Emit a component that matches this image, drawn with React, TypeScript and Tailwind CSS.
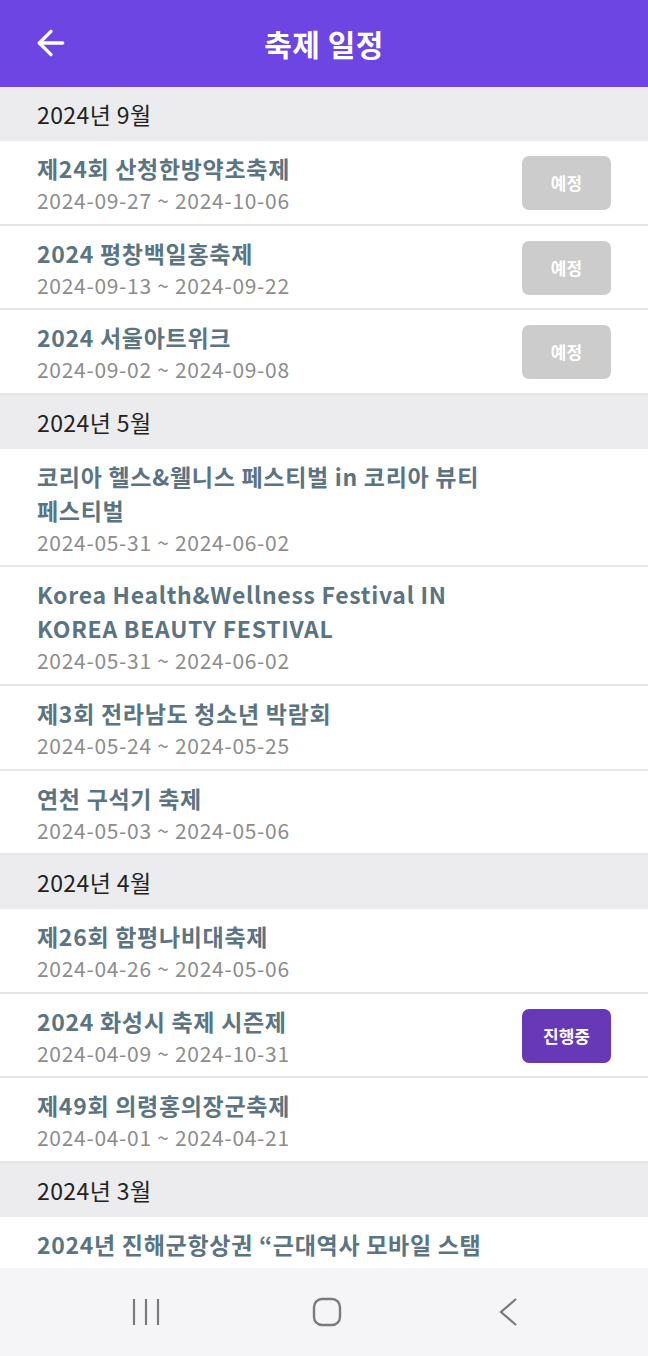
import { ArrowLeft } from "lucide-react";

type Festival = {
  title: string;
  period: string;
  status?: "upcoming" | "ongoing";
};

type MonthGroup = {
  label: string;
  items: Festival[];
};

const GROUPS: MonthGroup[] = [
  {
    label: "2024년 9월",
    items: [
      { title: "제24회 산청한방약초축제", period: "2024-09-27 ~ 2024-10-06", status: "upcoming" },
      { title: "2024 평창백일홍축제", period: "2024-09-13 ~ 2024-09-22", status: "upcoming" },
      { title: "2024 서울아트위크", period: "2024-09-02 ~ 2024-09-08", status: "upcoming" },
    ],
  },
  {
    label: "2024년 5월",
    items: [
      { title: "코리아 헬스&웰니스 페스티벌 in 코리아 뷰티 페스티벌", period: "2024-05-31 ~ 2024-06-02" },
      { title: "Korea Health&Wellness Festival IN KOREA BEAUTY FESTIVAL", period: "2024-05-31 ~ 2024-06-02" },
      { title: "제3회 전라남도 청소년 박람회", period: "2024-05-24 ~ 2024-05-25" },
      { title: "연천 구석기 축제", period: "2024-05-03 ~ 2024-05-06" },
    ],
  },
  {
    label: "2024년 4월",
    items: [
      { title: "제26회 함평나비대축제", period: "2024-04-26 ~ 2024-05-06" },
      { title: "2024 화성시 축제 시즌제", period: "2024-04-09 ~ 2024-10-31", status: "ongoing" },
      { title: "제49회 의령홍의장군축제", period: "2024-04-01 ~ 2024-04-21" },
    ],
  },
  {
    label: "2024년 3월",
    items: [
      { title: "2024년 진해군항상권 “근대역사 모바일 스탬프 투어”", period: "2024-03-01 ~ 2024-12-31" },
    ],
  },
];

function StatusBadge({ status }: { status?: Festival["status"] }) {
  if (!status) return <span className="w-[89px] shrink-0" />;
  const ongoing = status === "ongoing";
  return (
    <span
      className={
        "grid h-[54px] w-[89px] shrink-0 place-items-center rounded-[7px] text-[17px] font-bold text-white " +
        (ongoing ? "bg-[#6739b6]" : "bg-[#cccccc]")
      }
    >
      {ongoing ? "진행중" : "예정"}
    </span>
  );
}

function FestivalRow({ item }: { item: Festival }) {
  return (
    <li className="flex items-center gap-[22px] border-b-2 border-[#e6e6e8] bg-white px-[37px] pt-[10px] pb-[8.6px]">
      <div className="min-w-0 flex-1">
        <p className="text-[23px] font-bold leading-[34px] tracking-[0.7px] text-[#5b7482]">{item.title}</p>
        <p className="text-[21px] leading-[30px] tracking-[0.7px] text-[#8c8c8c]">{item.period}</p>
      </div>
      <StatusBadge status={item.status} />
    </li>
  );
}

function NavBar() {
  return (
    <nav className="flex h-[88px] shrink-0 items-center gap-[121px] bg-[#f5f5f7] pl-[116px] text-[#7a7a7a]">
      <div className="flex w-[60px] justify-center">
        <svg width="30" height="28" viewBox="0 0 30 28" fill="none" stroke="currentColor" strokeWidth="2.2">
          <path d="M3 1v26M15 1v26M27 1v26" />
        </svg>
      </div>
      <div className="flex w-[60px] justify-center">
        <svg width="30" height="30" viewBox="0 0 30 30" fill="none" stroke="currentColor" strokeWidth="2.4">
          <rect x="2" y="2" width="26" height="26" rx="8" />
        </svg>
      </div>
      <div className="flex w-[60px] justify-center">
        <svg width="22" height="30" viewBox="0 0 22 30" fill="none" stroke="currentColor" strokeWidth="2.2">
          <path d="M19 2L4 15l15 13" />
        </svg>
      </div>
    </nav>
  );
}

export default function App() {
  return (
    <div
      className="flex h-[1356px] w-full flex-col overflow-hidden bg-white"
      style={{ fontFamily: '"Noto Sans CJK KR", "Noto Sans", sans-serif' }}
    >
      {/* App bar */}
      <header className="relative flex h-[87px] shrink-0 items-center justify-center bg-[#6c45e2] text-white">
        <button className="absolute left-[27px] top-[19px] p-1" aria-label="뒤로">
          <ArrowLeft size={40} strokeWidth={2} />
        </button>
        <h1 className="text-[30px] font-bold tracking-[0.5px]">축제 일정</h1>
      </header>

      {/* Schedule list */}
      <main className="min-h-0 flex-1 overflow-hidden">
        {GROUPS.map((group) => (
          <section key={group.label}>
            <h2 className="flex h-[54px] items-center bg-[#ececee] px-[37px] text-[23px] tracking-[0.4px] text-[#222222]">
              {group.label}
            </h2>
            <ul>
              {group.items.map((item) => (
                <FestivalRow key={item.title} item={item} />
              ))}
            </ul>
          </section>
        ))}
      </main>

      <NavBar />
    </div>
  );
}
